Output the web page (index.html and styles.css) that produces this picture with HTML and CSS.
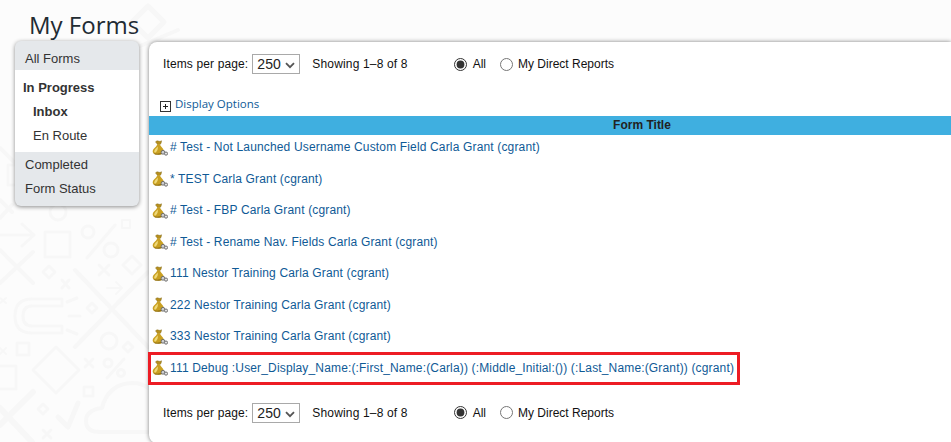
FILE: index.html
```html
<!DOCTYPE html>
<html lang="en">
<head>
<meta charset="utf-8">
<title>My Forms</title>
<link rel="stylesheet" href="styles.css">
</head>
<body>
<svg class="pattern" width="951" height="442" viewBox="0 0 951 442" aria-hidden="true">
  <g fill="none" stroke="#f7f7f7" stroke-width="3" stroke-linecap="round" stroke-linejoin="round">
    <path d="M148 6L164 22L148 38L132 22Z" stroke-width="5"/>
    <path d="M140 46L178 30" stroke-width="4"/>
    <path d="M0 148L16 164M0 200L12 212M12 205L0 218" stroke-width="4"/>
    <rect x="8" y="165" width="8" height="20"/>
    <path d="M0 235H34M22 224L34 235L22 246"/>
    <rect x="45" y="232" width="25" height="25"/>
    <circle cx="58" cy="212" r="8"/>
    <path d="M87 258L115 225"/><circle cx="88" cy="232" r="6"/><circle cx="111" cy="250" r="7"/>
    <rect x="122" y="220" width="8" height="8" stroke-width="2"/>
    <path d="M0 250L33 283M33 252L0 283" stroke-width="4"/>
    <path d="M49 266L55 272L49 278L43 272Z"/>
    <path d="M62 280L69 288M69 280L62 288"/>
    <path d="M99 265L109 275M109 265L99 275" stroke-width="3"/>
    <path d="M107 288H122M116 282L122 288L116 294" stroke-width="2"/>
    <path d="M132 256L141 265L132 274L123 265Z"/>
    <path d="M75 270L148 347M75 347L148 272" stroke-width="4"/>
    <path d="M62 299H32Q15 299 15 316Q15 333 32 333H62V326H32Q23 326 23 316Q23 306 32 306H62Z" stroke-width="3"/>
    <path d="M67 302L77 298M69 316H80M67 330L77 334" stroke-width="3"/>
    <path d="M92 303L97 308L92 313L87 308Z"/>
    <circle cx="109" cy="341" r="8"/>
    <path d="M128 342L133 347L128 352L123 347Z"/>
    <path d="M0 298L6 303M6 298L0 303M0 348L6 354M6 348L0 354" stroke-width="2"/>
    <rect x="17" y="343" width="12" height="12"/>
    <path d="M56 347L79 370L56 393L33 370Z"/>
    <rect x="-2" y="366" width="18" height="23"/>
    <path d="M85 359L93 367M93 359L85 367"/>
    <rect x="84" y="387" width="9" height="9"/>
    <path d="M107 378L124 359"/><circle cx="108" cy="363" r="4"/><circle cx="121" cy="373" r="3.5"/>
    <path d="M58 417L68 427L78 403" stroke-width="5"/>
    <path d="M43 404L48 409L43 414L38 409Z"/>
    <path d="M43 430L51 438M51 430L43 438"/>
    <path d="M148 432H100Q86 432 86 421Q86 410 102 408Q108 384 132 383Q142 383 148 388" stroke-width="4"/>
    <path d="M0 408L32 442M33 392L0 425" stroke-width="6"/>
  </g>
</svg>

<h1 class="page-title">My Forms</h1>

<div class="layout">
  <nav class="side-nav">
    <a class="nav-item nav-grey">All Forms</a>
    <div class="nav-group">
      <a class="nav-head">In Progress</a>
      <a class="nav-sub nav-current">Inbox</a>
      <a class="nav-sub">En Route</a>
    </div>
    <div class="nav-foot">
      <a class="nav-item">Completed</a>
      <a class="nav-item">Form Status</a>
    </div>
  </nav>

  <main class="panel">
    <div class="pager">
      <label class="pager-size">Items per page:
        <span class="select-wrap">
          <select class="size-select"><option>250</option></select>
          <svg class="chevron" width="10" height="7" viewBox="0 0 10 7"><path d="M1 1.2L5 5.2L9 1.2" fill="none" stroke="#555" stroke-width="1.8"/></svg>
        </span>
      </label>
      <span class="pager-count">Showing 1–8 of 8</span>
      <label class="radio radio-all"><input type="radio" name="scope-top" checked> All</label>
      <label class="radio radio-reports"><input type="radio" name="scope-top"> My Direct Reports</label>
    </div>

    <div class="options">
      <span class="plus-box"></span>
      <a class="options-link">Display Options</a>
    </div>

    <div class="table-head">Form Title</div>

    <ul class="rows">
      <li class="row"><svg class="bag" viewBox="0 0 16 16"><use href="#bag-icon"/></svg><a># Test - Not Launched Username Custom Field Carla Grant (cgrant)</a></li>
      <li class="row"><svg class="bag" viewBox="0 0 16 16"><use href="#bag-icon"/></svg><a>* TEST Carla Grant (cgrant)</a></li>
      <li class="row"><svg class="bag" viewBox="0 0 16 16"><use href="#bag-icon"/></svg><a># Test - FBP Carla Grant (cgrant)</a></li>
      <li class="row"><svg class="bag" viewBox="0 0 16 16"><use href="#bag-icon"/></svg><a># Test - Rename Nav. Fields Carla Grant (cgrant)</a></li>
      <li class="row"><svg class="bag" viewBox="0 0 16 16"><use href="#bag-icon"/></svg><a>111 Nestor Training Carla Grant (cgrant)</a></li>
      <li class="row"><svg class="bag" viewBox="0 0 16 16"><use href="#bag-icon"/></svg><a>222 Nestor Training Carla Grant (cgrant)</a></li>
      <li class="row"><svg class="bag" viewBox="0 0 16 16"><use href="#bag-icon"/></svg><a>333 Nestor Training Carla Grant (cgrant)</a></li>
      <li class="row row-marked"><svg class="bag" viewBox="0 0 16 16"><use href="#bag-icon"/></svg><a>111 Debug :User_Display_Name:(:First_Name:(Carla)) (:Middle_Initial:()) (:Last_Name:(Grant)) (cgrant)</a></li>
    </ul>

    <div class="pager pager-bottom">
      <label class="pager-size">Items per page:
        <span class="select-wrap">
          <select class="size-select"><option>250</option></select>
          <svg class="chevron" width="10" height="7" viewBox="0 0 10 7"><path d="M1 1.2L5 5.2L9 1.2" fill="none" stroke="#555" stroke-width="1.8"/></svg>
        </span>
      </label>
      <span class="pager-count">Showing 1–8 of 8</span>
      <label class="radio radio-all"><input type="radio" name="scope-bottom" checked> All</label>
      <label class="radio radio-reports"><input type="radio" name="scope-bottom"> My Direct Reports</label>
    </div>
  </main>
</div>

<svg class="defs" width="0" height="0" aria-hidden="true">
  <symbol id="bag-icon" viewBox="0 0 16 16">
    <path d="M3.5 2L5 .8L8 1.5L9.5 .8L9 3.5L7.8 4.6H5.5L4.8 3.2Z" fill="#b8901c" stroke="#7f6410" stroke-width=".5"/>
    <path d="M5.2 4.6H8C8.6 6.8 11.5 8 11.8 11C12 13.6 9.5 14.6 6.3 14.6C3 14.6 .6 13.8 .7 11.3C.9 8.4 4.6 7 5.2 4.6Z" fill="#c9a022"/>
    <path d="M2.2 11.5C2.4 9.5 4.5 8.3 5.6 6.6C6.4 8.6 5.4 11 3.6 12.6C2.8 12.8 2.2 12.4 2.2 11.5Z" fill="#f0d978"/>
    <path d="M1.5 13.2C4.5 14 8.5 13.8 11.4 12L11 13.8L7 14.8L3 14.4Z" fill="#8a6a10"/>
    <circle cx="11" cy="12.3" r="1.9" fill="#cfcfcf" stroke="#666" stroke-width=".9"/>
    <circle cx="14" cy="13.6" r="1.6" fill="#e4e4e4" stroke="#666" stroke-width=".9"/>
  </symbol>
</svg>
</body>
</html>
```
FILE: styles.css
```css
html, body {
  margin: 0;
  height: 442px;
  overflow: hidden;
}
body {
  position: relative;
  background: #fcfcfc;
  font-family: "Liberation Sans", Arial, sans-serif;
  font-size: 12px;
  color: #222;
}
.pattern {
  position: absolute;
  left: 0;
  top: 0;
  z-index: 0;
}
.defs { position: absolute; }
.page-title {
  position: relative;
  margin: 0;
  padding: 8px 0 0 29px;
  box-sizing: border-box;
  height: 41px;
  font-family: "Open Sans", sans-serif;
  font-weight: 400;
  font-size: 24px;
  line-height: 33px;
  color: #222b33;
  white-space: nowrap;
}
.layout {
  position: relative;
  display: flex;
  align-items: flex-start;
  gap: 10px;
  padding-left: 15px;
}
.side-nav {
  width: 124px;
  flex: none;
  border-radius: 6px;
  background: #e5e8eb;
  box-shadow: 0 1px 4px rgba(0,0,0,.45);
  font-size: 13px;
  overflow: hidden;
  color: #333;
}
.nav-item {
  display: block;
  height: 24px;
  line-height: 24px;
  padding-left: 10px;
}
.nav-grey { height: 29px; line-height: 35px; }
.nav-group {
  background: #fff;
  height: 82px;
  padding-top: 6px;
  box-sizing: border-box;
}
.nav-head {
  display: block;
  padding-left: 8px;
  height: 24px;
  line-height: 24px;
  font-weight: 700;
}
.nav-sub {
  display: block;
  padding-left: 18px;
  height: 24px;
  line-height: 24px;
}
.nav-current { font-weight: 700; }
.nav-foot { padding: 1px 0 5px; }
.panel {
  flex: 1;
  height: 401px;
  margin-top: 1px;
  background: #fff;
  border-radius: 8px 0 0 8px;
  box-shadow: 0 0 4px rgba(0,0,0,.5);
  box-sizing: border-box;
}
.pager {
  display: flex;
  align-items: center;
  height: 20px;
  padding: 12px 0 0 14px;
  color: #111;
  white-space: nowrap;
  letter-spacing: .13px;
}
.pager-bottom { padding-top: 0; margin-top: 19px; }
.pager-size { display: flex; align-items: center; gap: 4px; }
.select-wrap {
  position: relative;
  display: block;
  height: 20px;
}
.size-select {
  display: block;
  appearance: none;
  -webkit-appearance: none;
  width: 48px;
  height: 20px;
  margin: 0;
  padding: 0 0 0 4px;
  font: 14px "Liberation Sans", Arial, sans-serif;
  background: #fff;
  border: 1px solid #a9a9a9;
  border-radius: 0;
  color: #222;
}
.chevron {
  position: absolute;
  right: 5px;
  top: 8px;
  pointer-events: none;
}
.pager-count { margin-left: 12px; letter-spacing: .16px; }
.radio { display: flex; align-items: center; gap: 6px; letter-spacing: 0; }
.radio input {
  margin: 0;
  width: 13px;
  height: 13px;
  accent-color: #333;
}
.radio-all { margin-left: 46px; margin-right: 14px; }
.radio-reports { gap: 5px; }
.options {
  display: flex;
  align-items: center;
  height: 18px;
  margin-top: 20px;
  padding-left: 11px;
}
.plus-box {
  position: relative;
  width: 9px;
  height: 9px;
  border: 1px solid #333;
  margin-top: 6px;
  margin-right: 4px;
}
.plus-box::before, .plus-box::after {
  content: "";
  position: absolute;
  background: #222;
}
.plus-box::before { left: 2px; top: 4px; width: 5px; height: 1px; }
.plus-box::after { left: 4px; top: 2px; width: 1px; height: 5px; }
.options-link {
  font-family: "Open Sans", sans-serif;
  font-size: 11.5px;
  color: #0f5a96;
}
.table-head {
  height: 19px;
  line-height: 19px;
  margin-top: 4px;
  padding-left: 184px;
  background: #3fafe0;
  text-align: center;
  font-weight: 700;
  color: #222;
}
.rows {
  list-style: none;
  margin: 0;
  padding: 0;
}
.row {
  position: relative;
  display: flex;
  align-items: center;
  height: 31.5px;
  padding-left: 3px;
  color: #0f5a96;
  white-space: nowrap;
  letter-spacing: .155px;
}
.row:first-child { margin-top: -3.5px; }
.bag {
  width: 16px;
  height: 16px;
  flex: none;
  margin-top: 1px;
  margin-right: 2px;
}
.row-marked::after {
  content: "";
  position: absolute;
  left: -1px;
  top: 0;
  width: 586px;
  height: 27px;
  border: 3px solid #ed1c24;
}
```
